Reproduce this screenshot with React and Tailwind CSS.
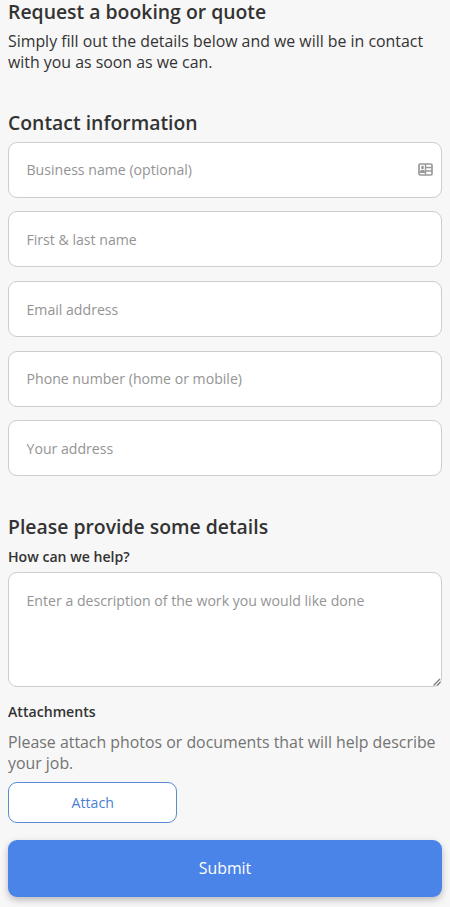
const contactFields = [
  { name: 'business', placeholder: 'Business name (optional)', contactCard: true },
  { name: 'name', placeholder: 'First & last name' },
  { name: 'email', placeholder: 'Email address' },
  { name: 'phone', placeholder: 'Phone number (home or mobile)' },
  { name: 'address', placeholder: 'Your address' },
];

function ContactCardIcon() {
  return (
    <svg width="15" height="13" viewBox="0 0 15 13" fill="none" className="absolute right-[9px] top-[21.5px]">
      <rect x="1" y="1" width="13" height="11" rx="1.2" fill="#fff" stroke="#999" strokeWidth="1.7" />
      <rect x="3.2" y="2.8" width="2.6" height="3.4" rx="1.2" fill="#999" />
      <path d="M2 10V8.5c0-1 1-1.5 2.5-1.5S7 7.5 7 8.5V10z" fill="#999" />
      <path d="M7.5 1v11M7.5 4.5h6M7.5 8h6" stroke="#999" strokeWidth="1.4" />
    </svg>
  );
}

function Field({ field }) {
  return (
    <div className="relative h-14">
      <input
        name={field.name}
        placeholder={field.placeholder}
        className="block h-14 w-full rounded-[9px] border border-[#cdcdcd] bg-white px-[17.5px] text-[14.12px] text-[#333] outline-none placeholder:text-[#949494]"
      />
      {field.contactCard && <ContactCardIcon />}
    </div>
  );
}

export default function App() {
  return (
    <form className="h-[907px] bg-[#f7f7f7] px-2 font-['Open_Sans',sans-serif] text-[#333]">
      <h1 className="text-[19.4px] leading-6 font-semibold">Request a booking or quote</h1>
      <p className="mt-[7px] text-[15.88px] leading-[21.3px]">
        Simply fill out the details below and we will be in contact
        <br />
        with you as soon as we can.
      </p>

      <h2 className="mt-[37.4px] text-[19.4px] leading-6 font-semibold">Contact information</h2>
      <div className="mt-[6.7px] flex flex-col gap-[13.7px]">
        {contactFields.map((field) => (
          <Field key={field.name} field={field} />
        ))}
      </div>

      <h2 className="mt-[38.3px] text-[19.4px] leading-6 font-semibold">Please provide some details</h2>
      <label htmlFor="description" className="mt-2 block text-[14.12px] leading-5 font-semibold">
        How can we help?
      </label>
      <div className="relative mt-[5px] h-[115px]">
        <textarea
          id="description"
          placeholder="Enter a description of the work you would like done"
          className="block h-[115px] w-full resize-none rounded-[9px] border border-[#cdcdcd] bg-white px-[17.5px] py-[18px] text-[14.12px] leading-5 outline-none placeholder:text-[#949494]"
        />
        <svg width="8" height="8" viewBox="0 0 8 8" className="absolute right-px bottom-px">
          <path d="M0.5 7.5l6.5-6.5M4 7.5l3.5-3.5" stroke="#777" strokeWidth="1.2" />
        </svg>
      </div>

      <h3 className="mt-[15px] text-[14.12px] leading-5 font-semibold">Attachments</h3>
      <p className="mt-[10px] text-[15.88px] leading-[21px] text-[#737373]">
        Please attach photos or documents that will help describe
        <br />
        your job.
      </p>
      <button
        type="button"
        className="mt-[8px] block h-[41px] w-[169.4px] rounded-[9px] border border-[#5b8bd5] bg-white text-[14.12px] text-[#4a7fd4]"
      >
        Attach
      </button>
      <button
        type="button"
        className="mt-[17px] block h-[57px] w-full rounded-[9px] bg-[#4a84e8] pt-[2px] text-[15.88px] text-white shadow-[0_3px_7px_rgba(0,0,0,0.25)]"
      >
        Submit
      </button>
    </form>
  );
}
